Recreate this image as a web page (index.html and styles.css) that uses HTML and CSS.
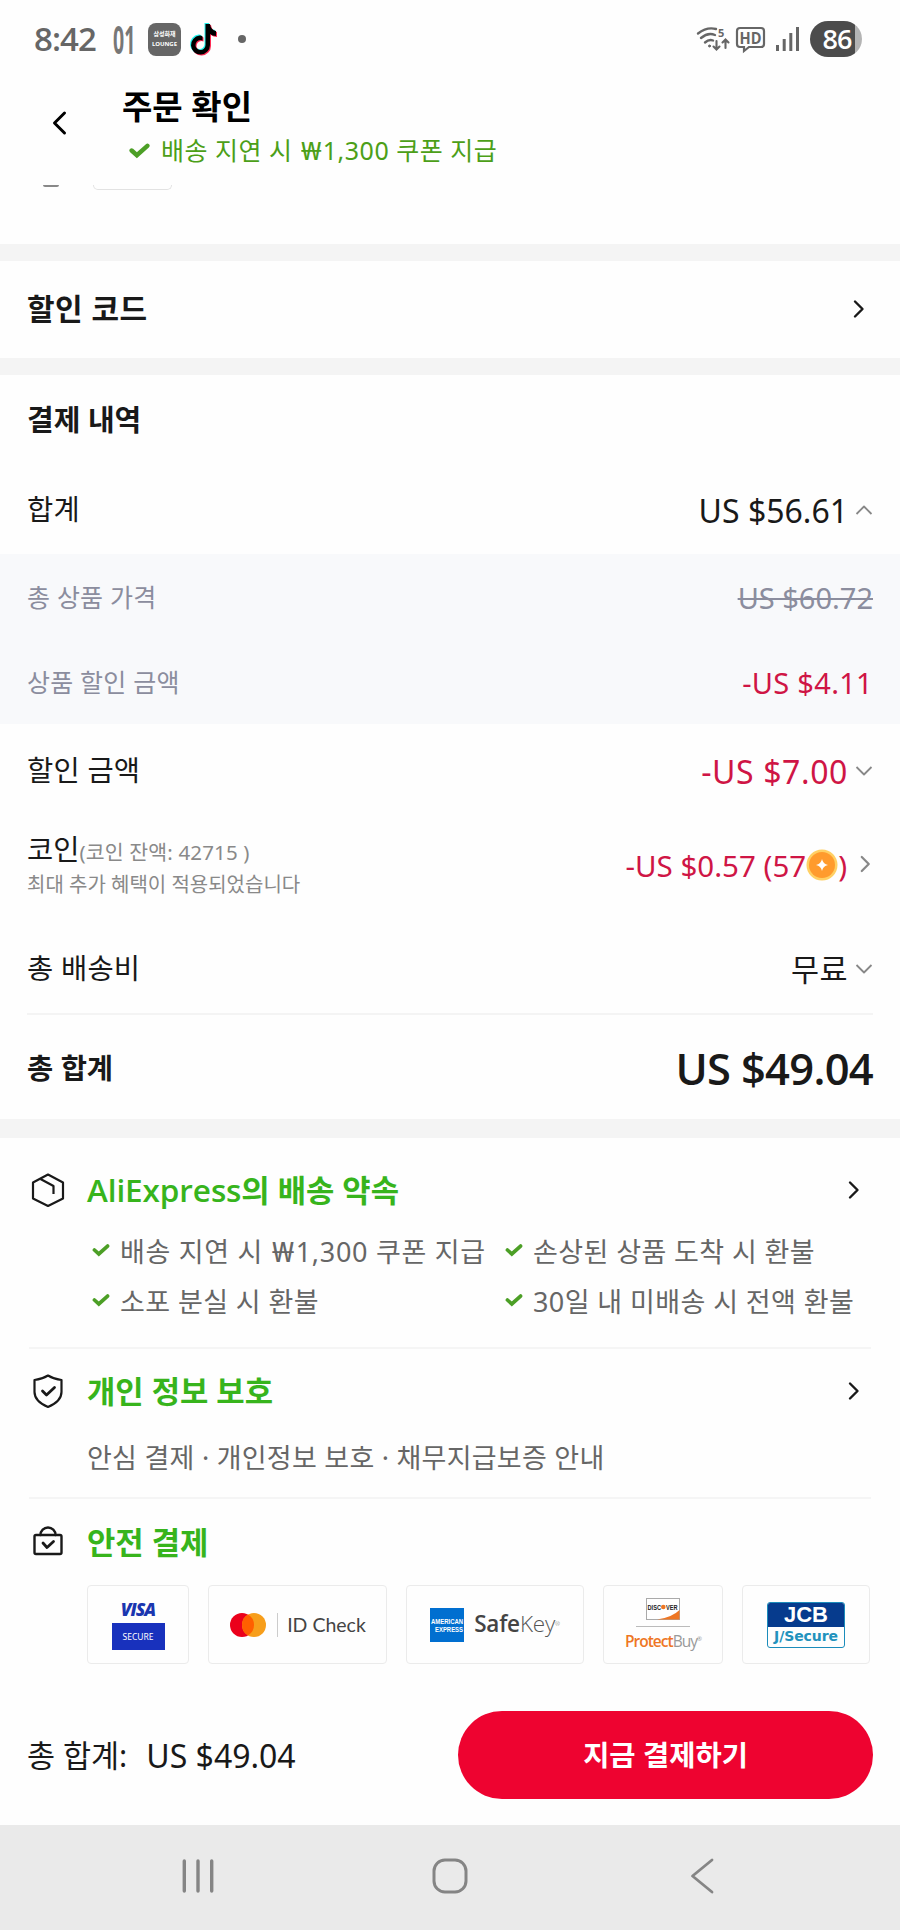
FILE: index.html
```html
<!DOCTYPE html>
<html lang="ko">
<head>
<meta charset="utf-8">
<title>주문 확인</title>
<link rel="stylesheet" href="styles.css">
</head>
<body>
<svg class="defs" width="0" height="0">
  <symbol id="tick" viewBox="0 0 20 16"><path d="M2.5 8 7.500 12.500 17.500 3.500" fill="none" stroke="currentColor" stroke-width="4.200" stroke-linecap="round" stroke-linejoin="miter"/></symbol>
  <symbol id="right" viewBox="0 0 14 20"><path d="M3 2.500 10.500 10 3 17.500" fill="none" stroke="currentColor" stroke-width="2.400" stroke-linecap="round" stroke-linejoin="round"/></symbol>
  <symbol id="down" viewBox="0 0 18 12"><path d="M1.5 2 9 9.500 16.500 2" fill="none" stroke="currentColor" stroke-width="1.800" stroke-linejoin="round"/></symbol>
  <symbol id="note" viewBox="0 0 28 32"><path d="M12.500 13.500v4a5 5 0 1 0 3 4.500V1h4.500c.5 4 2.500 6.500 6 7v5c-2.500 0-4.500-.8-6-2v11a9.500 9.500 0 1 1-10.500-9.400c1-.1 2 0 3 .9z"/></symbol>
</svg>
<div class="screen">
  <div class="status">
    <span class="clock">8:42</span>
    <span class="zero-one">01</span>
    <div class="lounge"><span>삼성화재</span><span>LOUNGE</span></div>
    <svg class="tiktok" width="30" height="34" viewBox="0 0 30 34"><use href="#note" x="0" y="0" width="28" height="32" fill="#25f4ee"/><use href="#note" x="2" y="2" width="28" height="32" fill="#fe2c55"/><use href="#note" x="1" y="1" width="28" height="32" fill="#000"/></svg>
    <i class="dot"></i>
    <div class="signals">
      <svg class="wifi" width="34" height="26" viewBox="0 0 34 26" fill="none" stroke="#666" stroke-width="2.400" stroke-linecap="round"><path d="M2 7.500Q11 .5 20 3M5 12q7-6 14-3M9 16.500q4-3.500 8-2"/><circle cx="13.500" cy="20" r="1" fill="#666" stroke-width="1"/><path d="M20.500 15v8M17.500 20.500l3 3 3-3M29.500 22v-8M26.500 16.500l3-3 3 3" stroke-width="2.100"/><text class="wifi-five" x="22" y="11">5</text></svg>
      <svg width="31" height="27" viewBox="0 0 31 27"><path d="M5 2h21q3 0 3 3v13q0 3-3 3H14l-5 4v-4H5q-3 0-3-3V5q0-3 3-3z" fill="none" stroke="#666" stroke-width="2.200"/><text class="hd" x="4.500" y="17.500" textLength="22" lengthAdjust="spacingAndGlyphs">HD</text></svg>
      <svg class="bars" width="24" height="26" viewBox="0 0 24 26" fill="#666"><rect x="0" y="19" width="3" height="6"/><rect x="6.700" y="13" width="3" height="12"/><rect x="13.300" y="7" width="3" height="18"/><rect x="20" y="1" width="3" height="24"/></svg>
      <span class="battery">86</span>
    </div>
  </div>
  <header class="header">
    <svg class="back" width="18" height="26" viewBox="0 0 18 26"><path d="M14.500 3 4.500 13l10 10" fill="none" stroke="#000" stroke-width="3" stroke-linecap="round" stroke-linejoin="round"/></svg>
    <div>
      <h1>주문 확인</h1>
      <p><svg class="tick" width="21" height="17"><use href="#tick"/></svg><span>배송 지연 시 <span class="won">₩</span>1,300 쿠폰 지급</span></p>
    </div>
  </header>
  <div class="peek"><i class="peek-arc"></i><i class="peek-box"></i></div>
  <div class="gap"></div>
  <section class="discount"><h2>할인 코드</h2><svg width="14" height="20"><use href="#right"/></svg></section>
  <div class="gap"></div>
  <section class="payment">
    <h2>결제 내역</h2>
    <div class="row sum"><span>합계</span><span class="amount">US $56.61<svg class="up" width="18" height="12"><use href="#down"/></svg></span></div>
    <div class="detail">
      <div class="row"><span>총 상품 가격</span><s>US $60.72</s></div>
      <div class="row"><span>상품 할인 금액</span><span class="red">-US $4.11</span></div>
    </div>
    <div class="row cut"><span>할인 금액</span><span class="amount red">-US $7.00<svg width="18" height="12"><use href="#down"/></svg></span></div>
    <div class="row coins">
      <div class="coin-text"><div>코인<small>(코인 잔액: 42715 )</small></div><p>최대 추가 혜택이 적용되었습니다</p></div>
      <span class="amount red">-US $0.57 (57<svg class="coin" width="32" height="32" viewBox="0 0 32 32"><circle cx="16" cy="16" r="15.500" fill="#ffd064"/><circle cx="16" cy="16" r="13" fill="#ff9b2d"/><path d="M16 10q1 5 6 6-5 1-6 6-1-5-6-6 5-1 6-6z" fill="#fff"/></svg>)<svg class="go" width="14" height="20"><use href="#right"/></svg></span>
    </div>
    <div class="row ship"><span>총 배송비</span><span class="amount free">무료<svg width="18" height="12"><use href="#down"/></svg></span></div>
    <div class="row total"><b>총 합계</b><strong>US $49.04</strong></div>
  </section>
  <div class="gap gap-lg"></div>
  <section class="promises">
    <article class="delivery">
      <div class="head">
        <svg width="36" height="36" viewBox="0 0 36 36" fill="none" stroke="#191919" stroke-width="2.200" stroke-linejoin="round"><path d="M18 2.500 33 10.500v16L18 34 3 26.500v-16z"/><path d="M10.500 7 23.500 14v8"/></svg>
        <h3><span class="brand">AliExpress</span>의 배송 약속</h3>
        <svg class="go" width="14" height="20"><use href="#right"/></svg>
      </div>
      <ul>
        <li><svg class="tick" width="18" height="14"><use href="#tick"/></svg><span class="wide">배송 지연 시 <span class="won">₩</span>1,300 쿠폰 지급</span></li>
        <li><svg class="tick" width="18" height="14"><use href="#tick"/></svg><span>손상된 상품 도착 시 환불</span></li>
        <li><svg class="tick" width="18" height="14"><use href="#tick"/></svg><span>소포 분실 시 환불</span></li>
        <li><svg class="tick" width="18" height="14"><use href="#tick"/></svg><span>30일 내 미배송 시 전액 환불</span></li>
      </ul>
    </article>
    <article class="privacy">
      <div class="head">
        <svg width="36" height="36" viewBox="0 0 36 36" fill="none" stroke="#191919" stroke-width="2.200" stroke-linecap="round" stroke-linejoin="round"><path d="M18 2.500c4 2.500 8.500 4 13.500 4.500v12c0 7-6.500 12-13.500 15C11 31 4.500 26 4.500 19V7C9.500 6.500 14 5 18 2.500z"/><path d="m12.500 18 4 4 8-7.500" stroke-width="2.800"/></svg>
        <h3>개인 정보 보호</h3>
        <svg class="go" width="14" height="20"><use href="#right"/></svg>
      </div>
      <p>안심 결제 · 개인정보 보호 · 채무지급보증 안내</p>
    </article>
    <article class="secure">
      <div class="head">
        <svg width="36" height="36" viewBox="0 0 36 36" fill="none" stroke="#191919" stroke-width="2.400" stroke-linecap="round" stroke-linejoin="round"><rect x="4.500" y="11" width="27" height="19" rx="1.500"/><path d="M10.500 11a7.500 7.500 0 0 1 15 0"/><path d="m13 19 4 4.500 6.500-6" stroke-width="2.800"/></svg>
        <h3>안전 결제</h3>
      </div>
      <div class="badges">
        <div class="badge visa"><b>VISA</b><span>SECURE</span></div>
        <div class="badge mc"><svg width="38" height="26" viewBox="0 0 38 26"><circle cx="13" cy="13" r="12" fill="#eb001b"/><circle cx="25" cy="13" r="12" fill="#f79e1b"/><path d="M19 2.600a12 12 0 0 1 0 20.800 12 12 0 0 1 0-20.800z" fill="#ff5f00"/></svg><i></i><span>ID Check</span></div>
        <div class="badge amex"><svg width="34" height="34" viewBox="0 0 34 34"><rect width="34" height="34" fill="#016fd0"/><text x="1" y="15.500" textLength="32" lengthAdjust="spacingAndGlyphs">AMERICAN</text><text x="5" y="23.500" textLength="28" lengthAdjust="spacingAndGlyphs">EXPRESS</text></svg><span><b>Safe</b>Key<sup>®</sup></span></div>
        <div class="badge disc"><svg width="34" height="22" viewBox="0 0 34 22"><rect x=".5" y=".5" width="33" height="21" fill="#fff" stroke="#aaa"/><path d="M11 21.500Q26 19.500 33.500 12v9.500z" fill="#ee7624"/><circle cx="17.300" cy="9" r="2.300" fill="#ee7624"/><text x="1.500" y="11.500" textLength="13.500" lengthAdjust="spacingAndGlyphs">DISC</text><text x="20" y="11.500" textLength="11.500" lengthAdjust="spacingAndGlyphs">VER</text></svg><i></i><span><b>Protect</b>Buy<sup>®</sup></span></div>
        <div class="badge jcb"><div><b>JCB</b><span>J/Secure</span></div></div>
      </div>
    </article>
  </section>
  <footer class="checkout"><div><span>총 합계:</span><span class="price">US $49.04</span></div><button>지금 결제하기</button></footer>
  <nav class="nav">
    <svg width="36" height="36" viewBox="0 0 36 36" stroke="#858585" stroke-width="3.400" stroke-linecap="round"><path d="M4.300 3v30M18 3v30M31.700 3v30"/></svg>
    <svg width="36" height="36" viewBox="0 0 36 36" fill="none" stroke="#858585" stroke-width="3"><rect x="2" y="2" width="32" height="32" rx="11"/></svg>
    <svg width="36" height="36" viewBox="0 0 36 36" fill="none" stroke="#858585" stroke-width="2.800" stroke-linecap="round" stroke-linejoin="round"><path d="M28 2 8.500 18 28 34"/></svg>
  </nav>
</div>
</body>
</html>
```
FILE: styles.css
```css
* { box-sizing: border-box; }
body { margin: 0; background: #fefefe; color: #191919; font-family: "Noto Sans", "Noto Sans CJK KR", sans-serif; line-height: 1; white-space: nowrap; }
h1, h2, h3, p, ul { margin: 0; padding: 0; list-style: none; }
svg { flex: none; display: block; overflow: visible; }
.defs { position: absolute; }
.screen { width: 900px; height: 1930px; display: flex; flex-direction: column; overflow: hidden; }
.screen > * { flex: none; }

.status { height: 78px; padding: 0 38px 0 34px; display: flex; align-items: center; color: #666; }
.clock { width: 79px; font: 600 33px/40px "Open Sans", sans-serif; letter-spacing: -.9px; }
.zero-one { width: 23px; font: 700 39px/44px "Open Sans", sans-serif; color: #777; transform: scaleX(.5); transform-origin: 0 50%; }
.lounge { width: 33px; height: 33px; margin-left: 12px; border-radius: 8px; background: #666; color: #fff; display: flex; flex-direction: column; align-items: center; justify-content: center; gap: 2px; font-size: 6px; font-weight: 700; line-height: 8px; }
.tiktok { margin-left: 8px; }
.dot { width: 8px; height: 8px; margin-left: 19px; border-radius: 50%; background: #666; }
.signals { margin-left: auto; display: flex; align-items: center; gap: 5px; }
.wifi-five { font: 700 11px "Open Sans", sans-serif; fill: #666; stroke: none; }
.hd { font: 700 16px "Open Sans", sans-serif; fill: #666; }
.bars { margin: 0 5px; }
.battery { width: 52px; height: 36px; border-radius: 18px; background: linear-gradient(90deg, #4c4c4c 45px, #b4b4b4 45px); color: #fff; font: 600 27px/36px "Open Sans", sans-serif; text-align: center; padding-left: 2px; letter-spacing: -1px; }

.header { height: 107px; display: flex; padding: 7px 0 0 50px; }
.back { margin-top: 25px; }
.header > div { margin-left: 54px; }
.header h1 { font-size: 33px; line-height: 44px; font-weight: 700; color: #000; }
.header p { display: flex; align-items: center; margin: 1px 0 0 7px; font-size: 25px; line-height: 40px; letter-spacing: .5px; color: #4c9f18; }
.header p > span { margin-left: 11px; }
.won { display: inline-block; transform: scaleX(1.22); margin: 0 3px; }
.tick { color: #4c9f26; }
.peek { height: 59px; display: flex; align-items: flex-start; }
.peek-arc { width: 16px; height: 2px; margin-left: 43px; background: #888; border-radius: 0 0 8px 8px; }
.peek-box { width: 79px; height: 5px; margin-left: 34px; border: 1px solid #e2e2e2; border-top: 0; border-radius: 0 0 5px 5px; }
.gap { height: 17px; background: #f4f4f4; }
.gap-lg { height: 19px; }

.discount { height: 97px; padding: 0 34px 2px 27px; display: flex; align-items: center; justify-content: space-between; }
.discount h2 { font-size: 30px; line-height: 40px; letter-spacing: .5px; }
.payment { height: 744px; }
.payment h2 { height: 89px; padding-left: 27px; font-size: 29px; line-height: 89px; }
.row { display: flex; align-items: center; justify-content: space-between; padding: 1px 27px 0 27px; font-size: 28.500px; }
.row > span:first-child { letter-spacing: .2px; }
.amount { display: flex; align-items: center; font-size: 32px; padding-top: 3px; }
.amount > svg { margin: -3px 0 0 7px; color: #888; }
.amount > .up { transform: rotate(180deg); }
.red { color: #cf1545; }
.sum { height: 90px; }
.detail { height: 170px; background: #f8f9fb; color: #8b8d9e; }
.detail .row { height: 85px; padding-top: 1px; font-size: 25px; }
.detail .row > :last-child { padding-top: 1px; font-size: 29px; }
.detail .red { letter-spacing: .3px; }
.detail s { text-decoration-thickness: 2px; }
.cut { height: 92px; }
.cut .amount { letter-spacing: .6px; }
.coins { height: 94px; padding-top: 3px; }
.coins p { font-size: 20px; line-height: 29px; color: #898989; }
.coins small { font-size: 20.5px; color: #898989; letter-spacing: .15px; }
.coin-text > div { line-height: 36px; }
.coins .amount { font-size: 29.500px; padding-top: 2px; }
.amount > .coin { margin: -2px 0 0; }
.coins .amount > .go { margin: -3px 1px 0 12px; width: 13px; }
.ship { height: 105px; margin: 0 27px; padding: 13px 0 0; border-bottom: 2px solid #f4f4f4; }
.free { font-size: 30.500px; letter-spacing: .5px; }
.free > svg { margin-top: -2px; }
.total { height: 104px; padding-top: 2px; }
.total strong { font: 600 43.500px/50px "Open Sans", sans-serif; letter-spacing: -.7px; padding-top: 2px; }

.promises { height: 547px; padding: 0 29px; }
.head { display: flex; align-items: center; }
.head > svg:first-child { margin-left: 1px; }
.head h3 { margin-left: 21px; font-size: 30.800px; line-height: 44px; color: #37b41c; }
.brand { letter-spacing: -.1px; font-size: 31.500px; font-weight: 600; font-family: "Open Sans", sans-serif; }
.head .go { margin: 0 10px 0 auto; }
.delivery { height: 211px; padding-top: 30px; border-bottom: 2px solid #f5f5f5; }
.delivery ul { display: grid; grid-template-columns: 413px 1fr; grid-auto-rows: 50px; margin: 14px 0 0 63px; }
.delivery li { display: flex; align-items: center; gap: 10px; font-size: 27px; letter-spacing: .4px; color: #666; }
.delivery .wide { letter-spacing: .7px; }
.delivery li > span { padding-top: 1px; }
.delivery li > svg { margin-top: -3px; }
.privacy { height: 150px; padding-top: 20px; border-bottom: 2px solid #f5f5f5; }
.privacy p { margin: 23px 0 0 58px; font-size: 27px; line-height: 44px; letter-spacing: .25px; color: #666; }
.secure { padding-top: 21px; }
.badges { display: flex; justify-content: space-between; margin: 21px 1px 0 58px; }
.badge { height: 79px; border: 1px solid #ebebeb; border-radius: 4px; display: flex; align-items: center; justify-content: center; }
.visa { width: 102px; flex-direction: column; }
.visa b { font: italic 800 17.500px/20px "Open Sans", sans-serif; color: #1a36b0; letter-spacing: -1px; }
.visa span { width: 53px; height: 27px; margin-top: 4px; background: #1831bd; color: #fff; font: 8.500px/27px "Noto Sans", sans-serif; text-align: center; }
.mc { width: 179px; }
.mc i { width: 1px; height: 24px; margin: 0 9px 0 10px; background: #ccc; }
.mc span { font: 400 19.500px/26px Lato, sans-serif; color: #444; }
.amex { width: 178px; }
.amex svg text { font: 700 7px "Liberation Sans", sans-serif; fill: #fff; }
.amex span { margin-left: 10px; font: 300 22.500px/30px "Open Sans", sans-serif; color: #555; padding-bottom: 1px; }
.amex span, .amex b { letter-spacing: -.2px; }
.amex b { color: #444; font-weight: 600; }
.badge sup { font-size: 6px; vertical-align: 6px; line-height: 0; }
.disc { width: 120px; flex-direction: column; }
.disc svg text { font: 700 7px "Liberation Sans", sans-serif; fill: #222; }
.disc i { width: 54px; height: 1px; margin: 6px 0 3px; background: #bbb; }
.disc span { font: 15.500px/22px "Open Sans", sans-serif; color: #999; letter-spacing: -1px; }
.disc b { color: #ee7624; font-weight: 600; }
.jcb { width: 128px; }
.jcb div { width: 78px; height: 46px; border: 1.500px solid #1b8cbb; border-radius: 3px; overflow: hidden; display: flex; flex-direction: column; text-align: center; }
.jcb b { height: 24px; background: #063b8d; color: #fff; font: 700 22px/24px "Liberation Sans", sans-serif; }
.jcb span { color: #2292bd; font: 700 14px/18px "DejaVu Sans", sans-serif; letter-spacing: -.1px; }

.checkout { height: 140px; padding: 26px 27px 0; display: flex; justify-content: space-between; }
.checkout div { height: 88px; display: flex; align-items: center; font-size: 30.500px; padding-top: 1px; }
.price { margin-left: 19px; font-size: 32px; }
.checkout button { width: 415px; height: 88px; padding: 1px 0 0; border: 0; border-radius: 44px; background: #ee0330; color: #fff; font: 700 28.500px/87px "Noto Sans", "Noto Sans CJK KR", sans-serif; }
.nav { height: 105px; padding: 0 180px 3px; background: #eaeaea; display: flex; align-items: center; justify-content: space-between; }
```
